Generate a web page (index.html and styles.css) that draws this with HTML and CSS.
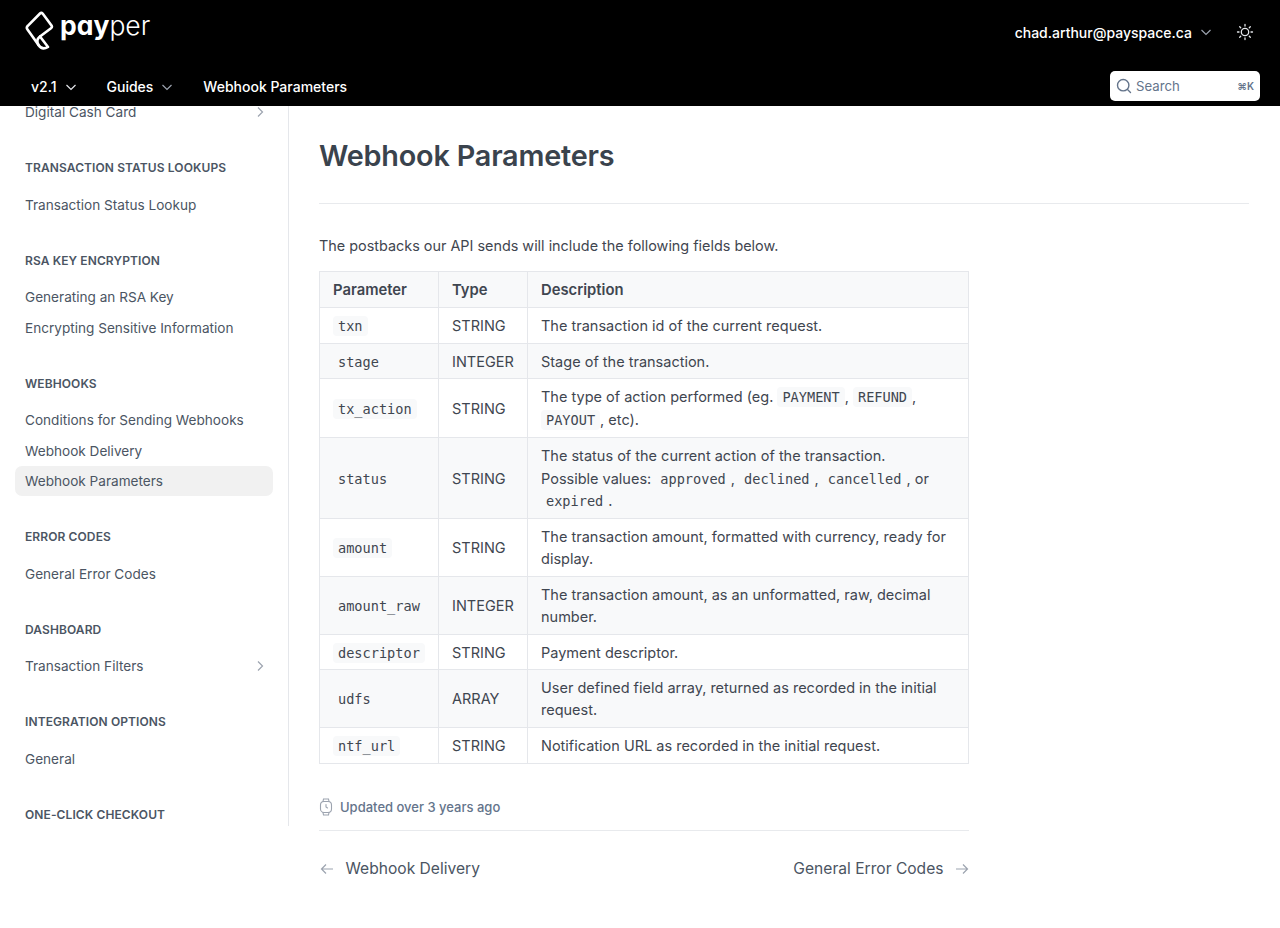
FILE: index.html
```html
<!DOCTYPE html>
<html lang="en">
<head>
    <meta charset="UTF-8">
    <meta name="viewport" content="width=device-width, initial-scale=1.0">
    <title>Webhook Parameters</title>
    <link rel="stylesheet" href="styles.css">
</head>
<body>
    <header class="topbar">
        <div class="topbar-row">
            <a class="logo" href="#">
                <svg class="logo-mark" width="30" height="42" viewBox="0 0 30 42" fill="none" stroke="#fff" stroke-width="2.600" stroke-linejoin="round" stroke-linecap="round">
                    <path d="M15 2.500 Q16.500 1 18 3 L26.500 14.500 Q27.500 16.200 26 17.300 L15 25.500 L23 36 Q17 39.500 13.500 34 L2.500 18.500 Q1 16.500 2.800 14.800 Z"/>
                    <path d="M15 25.500 Q10.500 29 13.500 34"/>
                </svg>
                <span class="logo-text"><b>pay</b>per</span>
            </a>
            <div class="account">
                <span class="account-email">chad.arthur@payspace.ca</span>
                <svg class="chev-down" width="12" height="12" viewBox="0 0 12 12"><path d="M1.500 4 L6 8.500 L10.500 4"/></svg>
                <svg class="sun" width="20" height="20" viewBox="0 0 20 20" fill="none" stroke="#e5e7eb" stroke-width="1.300" stroke-linecap="round">
                    <circle cx="10" cy="10" r="3.700"/>
                    <path d="M10 2.500v1.500M10 16v1.500M2.500 10h1.500M16 10h1.500M4.700 4.700l1 1M14.300 14.300l1 1M4.700 15.300l1-1M14.300 5.700l1-1"/>
                </svg>
            </div>
        </div>
        <div class="topbar-row nav-row">
            <nav class="nav">
                <span class="nav-item">v2.1 <svg class="chev-down bright" width="12" height="12" viewBox="0 0 12 12"><path d="M1.500 4 L6 8.500 L10.500 4"/></svg></span>
                <span class="nav-item">Guides <svg class="chev-down" width="12" height="12" viewBox="0 0 12 12"><path d="M1.500 4 L6 8.500 L10.500 4"/></svg></span>
                <span class="nav-item">Webhook Parameters</span>
            </nav>
            <div class="search">
                <svg width="16" height="16" viewBox="0 0 16 16" fill="none" stroke="#64748b" stroke-width="1.400" stroke-linecap="round"><circle cx="7.200" cy="7.200" r="5.700"/><path d="M11.500 11.500 L14.500 14.500"/></svg>
                <span class="search-label">Search</span>
                <span class="search-key">⌘K</span>
            </div>
        </div>
    </header>

    <div class="page">
        <aside class="sidebar">
            <div class="sidebar-inner">
                <a class="side-link has-arrow">Digital Cash Card <svg class="chev-right" width="10" height="12" viewBox="0 0 10 12"><path d="M3 1.500 L7.500 6 L3 10.500"/></svg></a>

                <h5 class="side-title">Transaction Status Lookups</h5>
                <a class="side-link">Transaction Status Lookup</a>

                <h5 class="side-title">RSA Key Encryption</h5>
                <a class="side-link">Generating an RSA Key</a>
                <a class="side-link">Encrypting Sensitive Information</a>

                <h5 class="side-title">Webhooks</h5>
                <a class="side-link">Conditions for Sending Webhooks</a>
                <a class="side-link">Webhook Delivery</a>
                <a class="side-link active">Webhook Parameters</a>

                <h5 class="side-title">Error Codes</h5>
                <a class="side-link">General Error Codes</a>

                <h5 class="side-title">Dashboard</h5>
                <a class="side-link has-arrow">Transaction Filters <svg class="chev-right" width="10" height="12" viewBox="0 0 10 12"><path d="M3 1.500 L7.500 6 L3 10.500"/></svg></a>

                <h5 class="side-title">Integration Options</h5>
                <a class="side-link">General</a>

                <h5 class="side-title">One-Click Checkout</h5>
            </div>
        </aside>

        <main class="content">
            <h1 class="page-title">Webhook Parameters</h1>
            <p class="intro">The postbacks our API sends will include the following fields below.</p>

            <table class="params">
                <colgroup>
                    <col class="col-param">
                    <col class="col-type">
                    <col>
                </colgroup>
                <thead>
                    <tr><th>Parameter</th><th>Type</th><th>Description</th></tr>
                </thead>
                <tbody>
                    <tr class="h-36"><td><code>txn</code></td><td>STRING</td><td>The transaction id of the current request.</td></tr>
                    <tr class="h-35"><td><code>stage</code></td><td>INTEGER</td><td>Stage of the transaction.</td></tr>
                    <tr class="h-59"><td><code>tx_action</code></td><td>STRING</td><td>The type of action performed (eg. <code>PAYMENT</code>, <code>REFUND</code>, <code>PAYOUT</code>, etc).</td></tr>
                    <tr class="h-81"><td><code>status</code></td><td>STRING</td><td>The status of the current action of the transaction.<br>Possible values: <code>approved</code>, <code>declined</code>, <code>cancelled</code>, or <code>expired</code>.</td></tr>
                    <tr class="h-58"><td><code>amount</code></td><td>STRING</td><td>The transaction amount, formatted with currency, ready for display.</td></tr>
                    <tr class="h-58"><td><code>amount_raw</code></td><td>INTEGER</td><td>The transaction amount, as an unformatted, raw, decimal number.</td></tr>
                    <tr class="h-35"><td><code>descriptor</code></td><td>STRING</td><td>Payment descriptor.</td></tr>
                    <tr class="h-58"><td><code>udfs</code></td><td>ARRAY</td><td>User defined field array, returned as recorded in the initial request.</td></tr>
                    <tr class="h-36"><td><code>ntf_url</code></td><td>STRING</td><td>Notification URL as recorded in the initial request.</td></tr>
                </tbody>
            </table>

            <div class="updated">
                <svg width="14" height="18" viewBox="0 0 14 18" fill="none" stroke="#9ca3af" stroke-width="1.100" stroke-linecap="round"><rect x="1.500" y="3.500" width="11" height="11" rx="3.500"/><path d="M4 3.500 L4.500 1 H9.500 L10 3.500 M4 14.500 L4.500 17 H9.500 L10 14.500 M7 6.500 V9 L8.500 10"/></svg>
                <span>Updated over 3 years ago</span>
            </div>

            <div class="pager">
                <a class="pager-link">
                    <svg class="arrow" width="14" height="14" viewBox="0 0 14 14"><path d="M13 7 H1.500 M6 2.500 L1.500 7 L6 11.500"/></svg>
                    Webhook Delivery
                </a>
                <a class="pager-link">
                    General Error Codes
                    <svg class="arrow" width="14" height="14" viewBox="0 0 14 14"><path d="M1 7 H12.500 M8 2.500 L12.500 7 L8 11.500"/></svg>
                </a>
            </div>
        </main>
    </div>
</body>
</html>
```

FILE: styles.css
```css
* {
    box-sizing: border-box;
}

body {
    margin: 0;
    font-family: 'Inter', sans-serif;
    color: #3f4650;
    background-color: #fff;
}

svg {
    display: block;
    flex: none;
}

/* top bar */
.topbar {
    height: 106px;
    background-color: #000;
    color: #fff;
    padding: 0 20px 0 25px;
}

.topbar-row {
    display: flex;
    justify-content: space-between;
    align-items: flex-start;
}

.nav-row {
    height: 35px;
    align-items: center;
}

.logo {
    display: flex;
    align-items: flex-start;
    height: 71px;
    padding-top: 11px;
    color: #fff;
    text-decoration: none;
}

.logo-mark {
    margin-right: 5px;
}

.logo-text {
    font-family: 'Inter', sans-serif;
    font-feature-settings: "cv11";
    font-size: 26.500px;
    font-weight: 300;
    line-height: 28px;
}

.logo-text b {
    font-weight: 700;
}

.account {
    display: flex;
    align-items: center;
    height: 24px;
    margin-top: 20px;
}

.account-email {
    font-size: 14px;
    font-weight: 500;
}

.account .chev-down {
    margin-left: 8px;
}

.sun {
    margin-left: 23px;
    margin-right: 5px;
}

.chev-down path {
    fill: none;
    stroke: #9ca3af;
    stroke-width: 1.2;
}

.chev-down.bright path {
    stroke: #e5e7eb;
}

.nav {
    display: flex;
    gap: 30px;
    margin-top: -4px;
    padding-left: 6px;
}

.nav-item {
    display: flex;
    align-items: center;
    gap: 8px;
    font-size: 14px;
    font-weight: 500;
}

.search {
    display: flex;
    align-items: center;
    width: 150px;
    height: 30px;
    padding: 0 6px;
    border-radius: 5px;
    background-color: #fff;
    color: #64748b;
    margin-top: -5px;
}

.search-label {
    flex: 1;
    margin-left: 4px;
    font-size: 13.200px;
}

.search-key {
    font-size: 10px;
    font-weight: 600;
}

/* layout */
.page {
    display: flex;
    align-items: flex-start;
}

.sidebar {
    width: 289px;
    height: 720px;
    overflow: hidden;
    flex: none;
    border-right: 1px solid #e5e7eb;
    padding: 0 15px;
}

.sidebar-inner {
    width: 258px;
}

.side-title {
    margin: 31.700px 0 0;
    padding: 0 10px 12.300px;
    font-size: 12px;
    font-weight: 600;
    line-height: 18px;
    letter-spacing: 0.1px;
    text-transform: uppercase;
    color: #4b5563;
}

.side-link {
    display: flex;
    justify-content: space-between;
    align-items: center;
    height: 30.600px;
    padding: 0 8px 0 10px;
    border-radius: 7px;
    font-size: 13.600px;
    color: #4b5563;
}

.side-link:first-child {
    height: 12px;
    margin-bottom: 41px;
}

.side-link.active {
    background-color: #f1f1f1;
    height: 30px;
}

.chev-right path {
    fill: none;
    stroke: #9ca3af;
    stroke-width: 1.2;
}

/* main column */
.content {
    flex: 1;
    padding: 30px 31px 0 30px;
}

.page-title {
    margin: 0;
    padding-bottom: 27px;
    border-bottom: 1px solid #e8eaed;
    font-size: 28.800px;
    font-weight: 600;
    line-height: 40px;
    letter-spacing: -0.2px;
    color: #3a434d;
}

.intro {
    margin: 30px 0 14px;
    font-size: 14.400px;
    line-height: 23px;
}

.params {
    width: 650px;
    border-collapse: collapse;
    table-layout: fixed;
    font-size: 14.500px;
    line-height: 22.800px;
}

.col-param {
    width: 119px;
}

.col-type {
    width: 89px;
}

.params th,
.params td {
    padding: 6.500px 13px 4.700px;
    border: 1px solid #e5e7eb;
    text-align: left;
}

.params th {
    height: 36px;
    padding: 6px 13px 5.200px;
    font-size: 14.800px;
    font-weight: 600;
    background-color: #f8f9fa;
}

.params tbody tr:nth-child(even) {
    background-color: #f8f9fa;
}

.h-36 td {
    height: 36px;
}

.h-35 td {
    height: 35px;
}

.h-58 td {
    height: 58px;
}

.h-59 td {
    height: 59px;
}

.h-81 td {
    height: 81px;
}

code {
    padding: 2px 5px;
    border-radius: 4px;
    background-color: #f8f9fa;
    font-family: 'DejaVu Sans Mono', monospace;
    font-size: 13.600px;
    line-height: 1;
}

.updated {
    display: flex;
    align-items: center;
    gap: 7px;
    width: 650px;
    margin-top: 33px;
    padding-bottom: 13px;
    border-bottom: 1px solid #e8eaed;
    font-size: 13px;
    line-height: 20px;
    font-weight: 500;
    color: #64748b;
}

.pager {
    display: flex;
    justify-content: space-between;
    width: 650px;
    margin-top: 28px;
    padding-left: 1px;
}

.pager-link {
    display: flex;
    align-items: center;
    gap: 11.500px;
    font-size: 15.600px;
    color: #4b5563;
}

.arrow path {
    fill: none;
    stroke: #9ca3af;
    stroke-width: 1.2;
}
```
